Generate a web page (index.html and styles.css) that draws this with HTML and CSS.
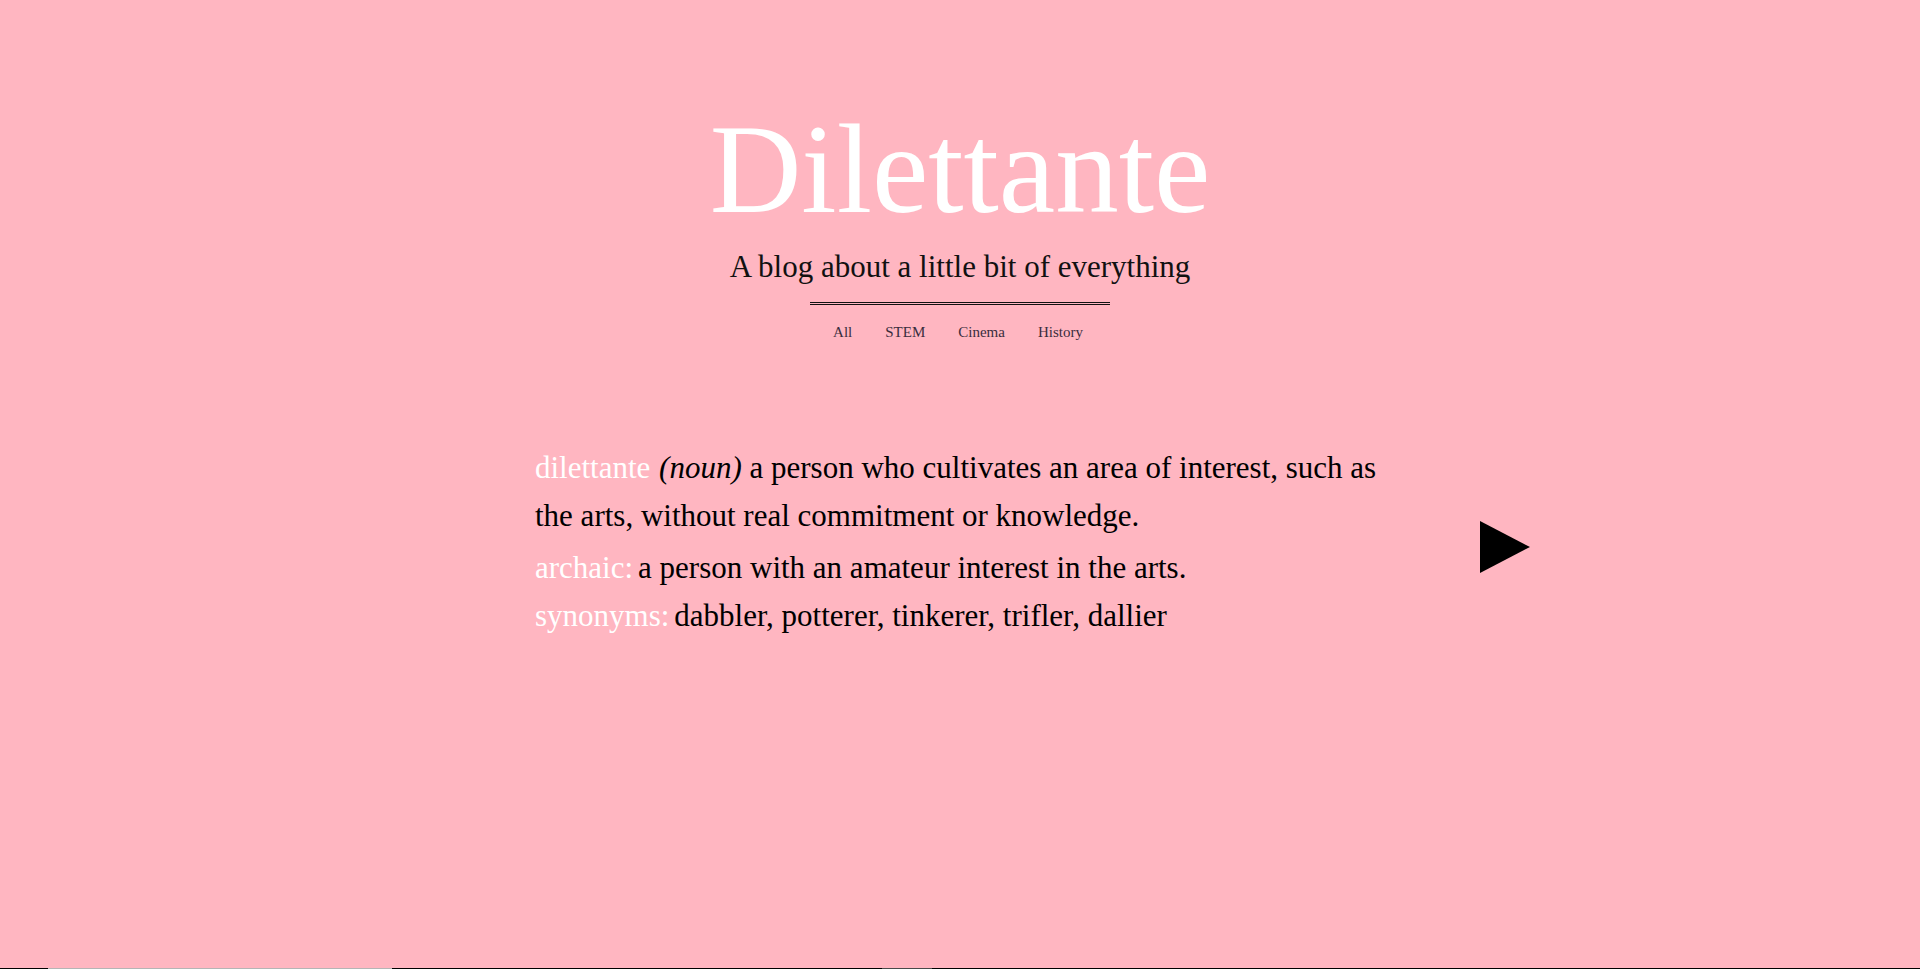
FILE: index.html
```html
<!DOCTYPE html>
<html lang="en">
<head>
<meta charset="utf-8">
<title>Dilettante</title>
<link rel="stylesheet" href="styles.css">
</head>
<body>
<div class="page">
  <header class="masthead">
    <h1 class="title">Dilettante</h1>
    <p class="tagline">A blog about a little bit of everything</p>
    <div class="rule"></div>
    <nav class="nav">
      <a class="nav-link" href="#">All</a>
      <a class="nav-link" href="#">STEM</a>
      <a class="nav-link" href="#">Cinema</a>
      <a class="nav-link" href="#">History</a>
    </nav>
  </header>
  <main class="feature">
    <div class="spacer"></div>
    <div class="definition">
      <p class="def-main"><span class="label">dilettante</span> <em class="pos">(noun)</em> a person who cultivates an area of interest, such as the arts, without real commitment or knowledge.</p>
      <p class="def-line"><span class="label tight">archaic:</span>a person with an amateur interest in the arts.</p>
      <p class="def-line"><span class="label tight">synonyms:</span>dabbler, potterer, tinkerer, trifler, dallier</p>
    </div>
    <div class="next-col">
      <button class="next" aria-label="Next">
        <svg width="50" height="52" viewBox="0 0 50 52"><polygon points="0,0 50,26 0,52" fill="#000"/></svg>
      </button>
    </div>
  </main>
  <div class="strip">
    <span class="seg seg-black s1"></span>
    <span class="seg seg-light s2"></span>
    <span class="seg seg-black s3"></span>
    <span class="seg seg-dark s4"></span>
    <span class="seg seg-black s5"></span>
  </div>
</div>
</body>
</html>
```
FILE: styles.css
```css
html, body {
  margin: 0;
  padding: 0;
  background: #ffb6c1;
}
body {
  font-family: "Liberation Serif", "Times New Roman", serif;
  color: #000;
}
.page {
  min-height: 100vh;
  display: flex;
  flex-direction: column;
}
.masthead {
  display: flex;
  flex-direction: column;
  align-items: center;
  padding-top: 106px;
}
.title {
  margin: 0;
  font-size: 127px;
  line-height: 127px;
  font-weight: normal;
  color: #fff;
}
.tagline {
  margin: 18px 0 0;
  font-size: 31px;
  line-height: 31px;
  color: #111;
}
.rule {
  margin-top: 20px;
  width: 300px;
  height: 1px;
  border-top: 1px solid #111;
  border-bottom: 1px solid #111;
}
.nav {
  margin-top: 20px;
  display: flex;
  gap: 33px;
  font-size: 15px;
  line-height: 15px;
  margin-left: -4px;
}
.nav-link {
  color: #3a2d3d;
  text-decoration: none;
}
.feature {
  margin-top: 104px;
  display: grid;
  grid-template-columns: 1fr 850px 1fr;
}
.definition {
  font-size: 31px;
  line-height: 48px;
}
.definition p {
  margin: 0;
}
.def-main {
  margin-bottom: 4px !important;
}
.label {
  color: #fff;
}
.label.tight {
  margin-right: 5px;
}
.pos {
  font-style: italic;
  margin-left: 1px;
}
.next-col {
  display: flex;
  align-items: flex-start;
}
.next {
  margin: 77px 0 0 95px;
  padding: 0;
  border: 0;
  background: none;
  display: block;
  width: 50px;
  height: 52px;
  cursor: pointer;
}
.next svg {
  display: block;
}
.strip {
  margin-top: auto;
  height: 1px;
  display: flex;
}
.seg {
  display: block;
  height: 1px;
}
.seg-black { background: #000; }
.seg-light { background: #b5b5b5; }
.seg-dark { background: #4a4a4a; }
.s1 { width: 48px; }
.s2 { width: 344px; }
.s3 { width: 490px; }
.s4 { width: 50px; }
.s5 { flex: 1; }
```
